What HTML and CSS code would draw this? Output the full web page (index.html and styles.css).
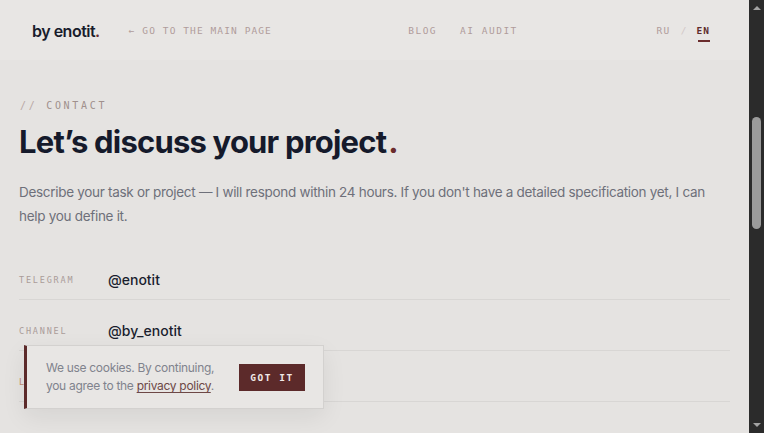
FILE: index.html
```html
<!DOCTYPE html>
<html lang="en">
<head>
<meta charset="utf-8">
<title>Contact — by enotit.</title>
<link rel="stylesheet" href="styles.css">
</head>
<body>
<div class="app">
  <div class="page">
    <header class="header">
      <div class="header-left">
        <a class="logo" href="#">by enotit<span class="dot">.</span></a>
        <a class="back" href="#">← GO TO THE MAIN PAGE</a>
      </div>
      <nav class="nav">
        <a href="#">BLOG</a>
        <a href="#">AI AUDIT</a>
      </nav>
      <div class="lang">
        <a href="#" class="lang-off">RU</a>
        <span class="sep">/</span>
        <a href="#" class="lang-on">EN</a>
      </div>
    </header>

    <main class="main">
      <div class="eyebrow"><span class="slashes">//</span> CONTACT</div>
      <h1 class="title">Let’s discuss your project<span class="dot">.</span></h1>
      <p class="lead">Describe your task or project — I will respond within 24 hours. If you don't have a detailed specification yet, I can help you define it.</p>

      <div class="contacts">
        <div class="row">
          <span class="label">TELEGRAM</span>
          <a class="value" href="#">@enotit</a>
        </div>
        <div class="row">
          <span class="label">CHANNEL</span>
          <a class="value" href="#">@by_enotit</a>
        </div>
        <div class="row">
          <span class="label accent">L</span>
        </div>
      </div>
    </main>

    <div class="cookie">
      <p class="cookie-text">We use cookies. By continuing, you agree to the <a href="#">privacy policy</a>.</p>
      <button class="cookie-btn">GOT IT</button>
    </div>
  </div>

  <div class="scrollbar">
    <span class="arrow up"></span>
    <div class="track"><div class="thumb"></div></div>
    <span class="arrow down"></span>
  </div>
</div>
</body>
</html>
```

FILE: styles.css
```css
* { box-sizing: border-box; }

html, body {
  margin: 0;
  height: 100%;
  overflow: hidden;
}

body {
  background: #e5e3e1;
  font-family: Inter, "Noto Sans", sans-serif;
  color: #161a2a;
}

a { text-decoration: none; color: inherit; }

.app {
  display: flex;
  height: 433px;
}

.page {
  flex: 1;
  position: relative;
  overflow: hidden;
  display: flex;
  flex-direction: column;
}

/* header */
.header {
  height: 60px;
  flex: none;
  display: flex;
  align-items: center;
  padding: 0 39px 0 32px;
  background: #e8e6e4;
}

.header-left {
  flex: 1;
  display: flex;
  align-items: center;
  gap: 29px;
}

.logo {
  font-size: 16px;
  font-weight: 600;
  letter-spacing: -0.5px;
  color: #181c2c;
  margin-top: 1px;
}

.dot { color: #6a2c2c; }

.back, .nav a, .lang a, .sep {
  font-family: "DejaVu Sans Mono", "Liberation Mono", monospace;
  font-size: 9.5px;
  letter-spacing: 1.1px;
  color: #b09c9b;
}

.nav {
  flex: 1;
  display: flex;
  gap: 23px;
  padding-left: 128px;
}

.nav a { letter-spacing: 1.5px; }

.lang {
  display: flex;
  align-items: center;
  gap: 10px;
}

.lang a { letter-spacing: 1.5px; }

.sep { color: #d2c8c7; letter-spacing: 0; }

.lang .lang-on {
  color: #5e2c2c;
  font-weight: bold;
  position: relative;
  letter-spacing: 1px;
}

.lang-on::after {
  content: "";
  position: absolute;
  left: 1px;
  right: 0;
  bottom: -6px;
  height: 2px;
  background: #6a2c2c;
}

/* main */
.main {
  padding: 38px 19px 0 19px;
  width: 749px;
}

.eyebrow {
  font-family: "DejaVu Sans Mono", "Liberation Mono", monospace;
  font-size: 10px;
  letter-spacing: 2.7px;
  color: #a0908c;
  line-height: 16px;
  padding-left: 1px;
}

.slashes { color: #b9a8a5; }

.title {
  margin: 9px 0 0 0;
  font-size: 31px;
  line-height: 38px;
  font-weight: 650;
  letter-spacing: -0.8px;
  color: #151a2b;
}

.title .dot { margin-left: 2px; }

.lead {
  margin: 19px 0 0 0;
  font-size: 13.5px;
  line-height: 24px;
  letter-spacing: -0.3px;
  color: #6e707a;
}

.contacts { margin-top: 21px; }

.row {
  display: flex;
  align-items: center;
  padding: 21px 0 9px 0;
  line-height: 20px;
  border-bottom: 1px solid #d8d6d4;
}

.label {
  width: 89px;
  font-family: "DejaVu Sans Mono", "Liberation Mono", monospace;
  font-size: 8.5px;
  letter-spacing: 1.8px;
  color: #aa9c99;
}

.label.accent { color: #c0896e; }

.value {
  font-size: 14px;
  font-weight: 500;
  color: #1a1e2e;
}

/* cookie banner */
.cookie {
  position: absolute;
  left: 24px;
  top: 345px;
  width: 300px;
  height: 64px;
  display: flex;
  align-items: center;
  gap: 14px;
  padding: 0 18px 0 19px;
  background: #e8e6e4;
  border: 1px solid #d3d1cf;
  border-left: 3px solid #5c2a2a;
  box-shadow: 0 8px 24px rgba(0, 0, 0, 0.07);
}

.cookie-text {
  margin: 0;
  flex: 1;
  font-size: 12px;
  line-height: 18px;
  letter-spacing: -0.3px;
  color: #80838d;
}

.cookie-text a {
  color: #6d4846;
  text-decoration: underline;
  text-underline-offset: 2px;
}

.cookie-btn {
  flex: none;
  width: 66px;
  height: 27px;
  border: 0;
  background: #5c2a2a;
  color: #f1e9e8;
  font-family: "DejaVu Sans Mono", "Liberation Mono", monospace;
  font-weight: bold;
  font-size: 9.5px;
  letter-spacing: 1.5px;
  padding: 0;
}

/* fake scrollbar */
.scrollbar {
  width: 15px;
  flex: none;
  background: #2b2b2b;
  display: flex;
  flex-direction: column;
  align-items: center;
}

.arrow {
  width: 0;
  height: 0;
  border-left: 4px solid transparent;
  border-right: 4px solid transparent;
  margin: 6px 0;
}

.arrow.up { border-bottom: 4px solid #a3a3a3; }
.arrow.down { border-top: 4px solid #a3a3a3; }

.track {
  flex: 1;
  width: 100%;
  display: flex;
  flex-direction: column;
  align-items: center;
  padding-top: 101px;
}

.thumb {
  width: 9px;
  height: 112px;
  border-radius: 5px;
  background: #9b9b9b;
}
```
